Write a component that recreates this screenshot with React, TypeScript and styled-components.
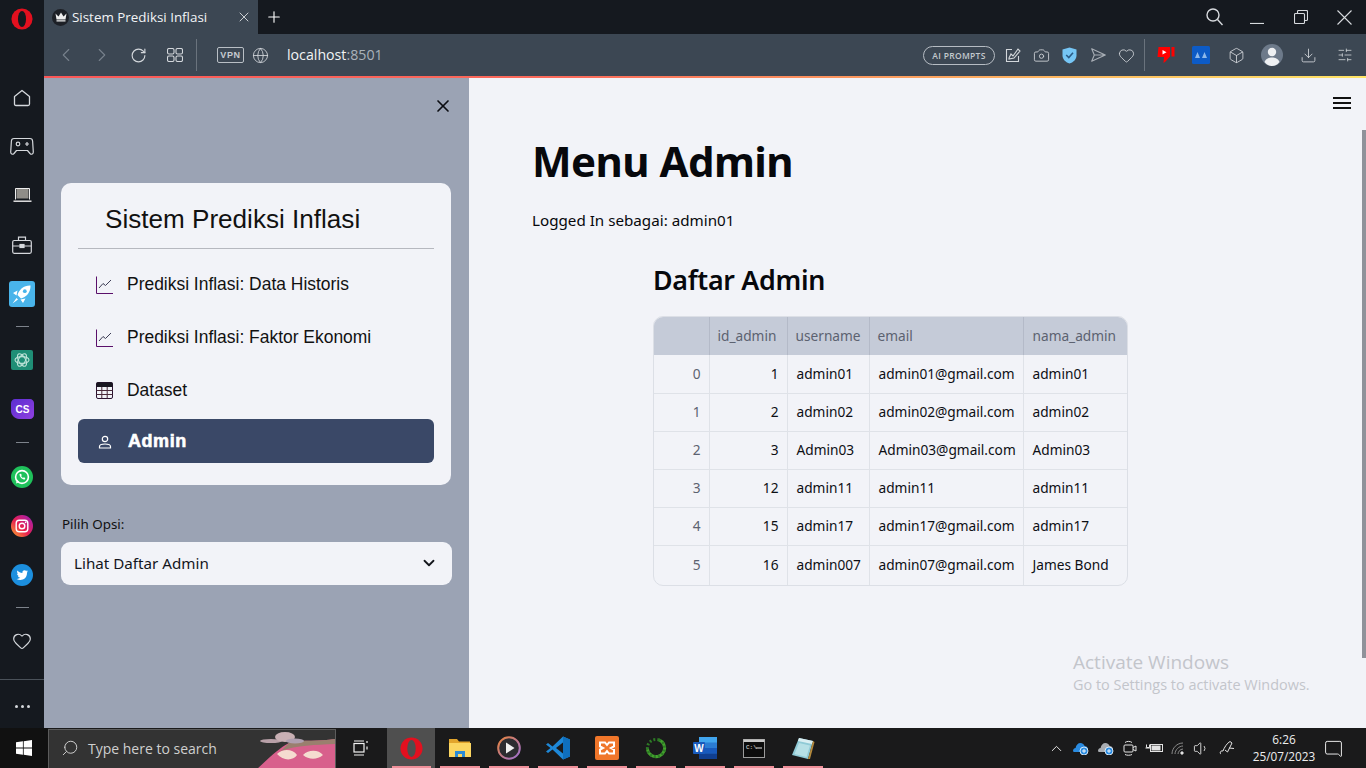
import { ReactNode } from 'react';
import styled, { createGlobalStyle } from 'styled-components';
import {
  ChevronDown,
  ChevronLeft,
  ChevronRight,
  ChevronUp,
  Download,
  Globe,
  Heart,
  Box,
  Plus,
  RotateCw,
  Search,
  SlidersHorizontal,
  X,
  Camera,
  Volume1,
  MessageSquare,
} from 'lucide-react';

const BODY_FONT = `'Noto Sans', 'Open Sans', sans-serif`;
const NAV_FONT = `'Liberation Sans', Arial, sans-serif`;
const UI_FONT = `'Open Sans', 'Noto Sans', sans-serif`;

const rows = [
  { i: 0, id: 1, username: 'admin01', email: 'admin01@gmail.com', nama: 'admin01' },
  { i: 1, id: 2, username: 'admin02', email: 'admin02@gmail.com', nama: 'admin02' },
  { i: 2, id: 3, username: 'Admin03', email: 'Admin03@gmail.com', nama: 'Admin03' },
  { i: 3, id: 12, username: 'admin11', email: 'admin11', nama: 'admin11' },
  { i: 4, id: 15, username: 'admin17', email: 'admin17@gmail.com', nama: 'admin17' },
  { i: 5, id: 16, username: 'admin007', email: 'admin07@gmail.com', nama: 'James Bond' },
];

const GlobalStyle = createGlobalStyle`
  html, body { margin: 0; padding: 0; height: 100%; overflow: hidden; }
  body { font-family: ${BODY_FONT}; background: #15191f; }
  * { box-sizing: border-box; }
`;

const Screen = styled.div`
  width: 1366px;
  height: 768px;
  display: grid;
  grid-template-rows: 728px 40px;
  overflow: hidden;
  position: relative;
`;

const Window = styled.div`
  display: grid;
  grid-template-columns: 44px 1fr;
  grid-template-rows: 728px;
  min-height: 0;
`;

/* opera side rail */
const Rail = styled.nav`
  background: #15191f;
  display: flex;
  flex-direction: column;
  align-items: center;
  color: #d5d8dc;
`;

const RailLogo = styled.div`
  height: 73px;
  padding-top: 8px;
  display: flex;
  justify-content: center;
  align-items: flex-start;
`;

const RailItem = styled.div`
  height: 49px;
  width: 44px;
  flex: none;
  display: flex;
  align-items: center;
  justify-content: center;
`;

const RailSep = styled.div<{ $h: number }>`
  height: ${(p) => p.$h}px;
  width: 44px;
  flex: none;
  display: flex;
  align-items: center;
  justify-content: center;
  &::after {
    content: '';
    width: 13px;
    height: 1px;
    background: #7d838b;
  }
`;

const RailFoot = styled.div`
  margin-top: 14px;
  width: 44px;
  height: 49px;
  padding-top: 5px;
  border-top: 1px solid #4a5159;
  display: flex;
  align-items: center;
  justify-content: center;
  gap: 3px;
`;

const RailDot = styled.span`
  width: 3px;
  height: 3px;
  border-radius: 50%;
  background: #d5d8dc;
`;

const Browser = styled.div`
  display: grid;
  grid-template-rows: 34px 42px 2px 1fr;
  min-width: 0;
  min-height: 0;
`;

const TabStrip = styled.div`
  background: #15191f;
  display: flex;
  align-items: stretch;
  color: #fff;
`;

const Tab = styled.div`
  width: 214px;
  background: #3c4753;
  display: flex;
  align-items: center;
  padding: 0 6px 0 8px;
  font: 400 13.4px ${UI_FONT};
  color: #f2f4f6;
  gap: 3px;
`;

const Favicon = styled.span`
  width: 17px;
  height: 17px;
  border-radius: 50%;
  background: #1d2026;
  display: flex;
  align-items: center;
  justify-content: center;
  flex: none;
`;

const TabTitle = styled.span`
  flex: 1;
  white-space: nowrap;
`;

const NewTab = styled.div`
  width: 32px;
  display: flex;
  align-items: center;
  justify-content: center;
`;

const WindowControls = styled.div`
  margin-left: auto;
  display: flex;
  align-items: center;
  color: #d7dade;
`;

const ControlSlot = styled.div<{ $w: number }>`
  width: ${(p) => p.$w}px;
  height: 34px;
  display: flex;
  align-items: center;
  justify-content: center;
`;

const Toolbar = styled.div`
  background: #3c4753;
  display: flex;
  align-items: center;
  padding-left: 4px;
  color: #d3d7db;
`;

const ToolSlot = styled.div<{ $w: number; $dim?: boolean }>`
  width: ${(p) => p.$w}px;
  height: 42px;
  flex: none;
  display: flex;
  align-items: center;
  justify-content: center;
  color: ${(p) => (p.$dim ? '#77818c' : 'inherit')};
`;

const ToolDivider = styled.div<{ $ml: number; $mr: number }>`
  width: 1px;
  height: 32px;
  background: #6a737d;
  flex: none;
  margin: 0 ${(p) => p.$mr}px 0 ${(p) => p.$ml}px;
`;

const VpnBadge = styled.span`
  width: 27px;
  height: 16px;
  border: 1px solid #b9bfc5;
  border-radius: 2px;
  font: 600 9px ${NAV_FONT};
  letter-spacing: 0.6px;
  color: #c6cbd0;
  display: flex;
  align-items: center;
  justify-content: center;
`;

const Address = styled.div`
  margin-left: 14px;
  font: 400 14.2px ${UI_FONT};
  color: #f1f3f5;
  margin-top: -2px;
  span {
    color: #aab2ba;
  }
`;

const ToolRight = styled.div`
  margin-left: auto;
  display: flex;
  align-items: center;
`;

const PromptPill = styled.div`
  width: 72px;
  height: 19px;
  border: 1px solid #b6bcc3;
  border-radius: 10px;
  font: 600 8.5px ${UI_FONT};
  letter-spacing: 0.3px;
  color: #c4c9ce;
  display: flex;
  align-items: center;
  justify-content: center;
  margin-right: 3px;
  white-space: nowrap;
`;

const AccentLine = styled.div`
  background: linear-gradient(90deg, #fb5757 0%, #fb6b5b 40%, #fdb35f 75%, #ffe566 100%);
`;

const Page = styled.div`
  display: grid;
  grid-template-columns: 425px 1fr;
  min-height: 0;
  position: relative;
`;

const Sidebar = styled.aside`
  background: #9ba3b4;
  padding: 105px 17px 0;
  position: relative;
`;

const CloseButton = styled.div`
  position: absolute;
  top: 18px;
  right: 16px;
  color: #0b0d12;
  display: flex;
`;

const NavCard = styled.div`
  width: 390px;
  height: 302px;
  background: #f2f3f8;
  border-radius: 10px;
  padding: 17px 17px 0;
`;

const NavTitle = styled.div`
  height: 49px;
  padding-left: 27px;
  padding-top: 4px;
  border-bottom: 1px solid #b6b8bf;
  font: 400 26.1px ${NAV_FONT};
  color: #111;
  margin-bottom: 9px;
`;

const NavItem = styled.div<{ $h: number }>`
  height: ${(p) => p.$h}px;
  display: flex;
  align-items: center;
  gap: 14px;
  padding-left: 18px;
  font: 400 17.45px ${NAV_FONT};
  color: #111;
`;

const ActiveNavItem = styled.div`
  height: 44px;
  margin-top: 3px;
  display: flex;
  align-items: center;
  gap: 16px;
  padding: 1px 0 0 20px;
  border-radius: 6px;
  font: 900 18px ${NAV_FONT};
  letter-spacing: 0.55px;
  color: #fff;
  background: #3a4867;
  -webkit-text-stroke: 0.6px #fff;
`;

const FieldLabel = styled.div`
  margin-top: 30px;
  font-size: 13.4px;
  line-height: 18px;
  color: #111;
  margin-bottom: 9px;
  padding-left: 1px;
`;

const SelectBox = styled.div`
  width: 391px;
  height: 43px;
  background: #f2f3f8;
  border-radius: 9px;
  padding: 0 14px 2px 13px;
  display: flex;
  align-items: center;
  justify-content: space-between;
  font-size: 15.2px;
  color: #14161c;
`;

const Main = styled.main`
  background: #f2f3f8;
  padding: 51px 0 0 63px;
  position: relative;
  color: #07080c;
`;

const PageTitle = styled.h1`
  margin: 0;
  font: 700 42px/64px ${BODY_FONT};
  letter-spacing: -0.55px;
`;

const LoggedIn = styled.p`
  margin: 15px 0 0;
  font-size: 15.2px;
  line-height: 24px;
`;

const TableBlock = styled.section`
  margin: 29px 0 0 121px;
  width: 475px;
`;

const SectionTitle = styled.h2`
  margin: 0 0 17px;
  font: 600 26.8px/38px ${BODY_FONT};
  letter-spacing: -0.3px;
`;

const TableFrame = styled.div`
  border: 1px solid #dcdfe6;
  border-radius: 10px;
  overflow: hidden;
  width: 475px;
`;

const Table = styled.table`
  border-collapse: collapse;
  table-layout: fixed;
  width: 473px;
  font-size: 13.7px;
`;

const Th = styled.th`
  height: 38px;
  background: #c5cbd8;
  color: #5c6270;
  font-weight: 400;
  text-align: left;
  padding: 0 8px 2px;
  border-right: 1px solid #b4bac8;
  white-space: nowrap;
  &:last-child {
    border-right: 0;
    padding-left: 9px;
  }
`;

const Td = styled.td<{ $right?: boolean; $muted?: boolean }>`
  height: 38px;
  padding: 0 8px 1px ${(p) => (p.$right ? 8 : 9)}px;
  color: ${(p) => (p.$muted ? '#5c6270' : '#0d0f14')};
  text-align: ${(p) => (p.$right ? 'right' : 'left')};
  border-right: 1px solid #dfe2e8;
  border-top: 1px solid #dfe2e8;
  white-space: nowrap;
  &:last-child { border-right: 0; }
  tr:first-child > & { border-top: 0; }
  tr:last-child > & { height: 40px; }
`;

const BurgerButton = styled.div`
  position: absolute;
  top: 19px;
  right: 15px;
  display: flex;
`;

const ScrollThumb = styled.div`
  position: absolute;
  right: 0;
  top: 52px;
  width: 4px;
  height: 528px;
  background: #8f929a;
`;

const Watermark = styled.div`
  position: absolute;
  left: 604px;
  top: 572px;
  color: #c3c5cb;
  font: 400 14.45px/21px ${UI_FONT};
  b {
    display: block;
    font-weight: 400;
    font-size: 19px;
    line-height: 24px;
  }
`;

/* windows taskbar */
const Taskbar = styled.footer`
  background: #1a1a1b;
  display: flex;
  align-items: stretch;
  color: #f2f2f2;
`;

const StartButton = styled.div`
  width: 48px;
  background: #111;
  display: flex;
  align-items: center;
  justify-content: center;
`;

const SearchBox = styled.div`
  width: 288px;
  margin-top: 1px;
  background: #333;
  border: 1px solid #5c5c5c;
  border-bottom: 0;
  display: flex;
  align-items: center;
  padding: 0 0 2px 12px;
  gap: 9px;
  font: 400 14px ${UI_FONT};
  color: #cfcfcf;
  position: relative;
  overflow: hidden;
`;

const SearchArt = styled.svg`
  position: absolute;
  right: 0;
  top: 0;
`;

const TaskSlot = styled.div<{ $w?: number; $on?: boolean; $run?: boolean }>`
  width: ${(p) => p.$w ?? 49}px;
  flex: none;
  display: flex;
  align-items: center;
  justify-content: center;
  position: relative;
  background: ${(p) => (p.$on ? '#4f4f4f' : 'transparent')};
  &::after {
    content: '';
    display: ${(p) => (p.$run ? 'block' : 'none')};
    position: absolute;
    left: 5px;
    right: 4px;
    bottom: 0;
    height: 2px;
    background: #ef8f99;
  }
`;

const Tray = styled.div`
  margin-left: auto;
  display: flex;
  align-items: center;
`;

const TraySlot = styled.div<{ $w: number }>`
  width: ${(p) => p.$w}px;
  flex: none;
  display: flex;
  align-items: center;
  justify-content: center;
  height: 40px;
`;

const Clock = styled.div`
  width: 70px;
  margin-left: 8px;
  text-align: center;
  font: 400 11.8px/17px ${UI_FONT};
  color: #efefef;
`;

const NotifySlot = styled(TraySlot)`
  margin-right: 19px;
`;

const OperaMark = ({ size, hole }: { size: number; hole: string }) => (
  <svg width={size} height={size} viewBox="0 0 24 24">
    <ellipse cx="12" cy="12" rx="11.5" ry="11.5" fill="#e3101f" />
    <ellipse cx="12" cy="12" rx="4.4" ry="8.8" fill={hole} />
  </svg>
);

const ChartIcon = () => (
  <svg width="17" height="18" viewBox="0 0 17 18" fill="none" strokeWidth="1">
    <path d="M0.5 0.5V17.5H17" stroke="#5a0f6a" />
    <path d="M3 12L7 7.5L9.5 9.5L15 4" stroke="#3d3d55" />
  </svg>
);

const TableIcon = () => (
  <svg width="17" height="17" viewBox="0 0 17 17" fill="none">
    <rect x="0.5" y="0.5" width="16" height="16" rx="1.5" stroke="#2b1230" />
    <rect x="0.5" y="0.5" width="16" height="4.5" fill="#191720" />
    <path d="M0.5 8.5H16.5M0.5 12.5H16.5M5.8 5V16.5M11.2 5V16.5" stroke="#4b2a3a" />
  </svg>
);

const AdminIcon = () => (
  <svg width="14" height="14" viewBox="0 0 14 14" fill="none" stroke="#fff" strokeWidth="1.2">
    <circle cx="7" cy="4" r="2.7" />
    <path d="M1.5 13V11.5C1.5 10 3.5 9 7 9S12.5 10 12.5 11.5V13Z" />
  </svg>
);

const RailHome = () => (
  <svg width="18" height="18" viewBox="0 0 18 18" fill="none" stroke="currentColor" strokeWidth="1.3" strokeLinejoin="round">
    <path d="M9 1.5L16.5 7.5V15C16.5 16 16 16.5 15 16.5H3C2 16.5 1.5 16 1.5 15V7.5Z" />
  </svg>
);

const RailGame = () => (
  <svg width="24" height="19" viewBox="0 0 24 19" fill="none" stroke="currentColor" strokeWidth="1.2" strokeLinejoin="round">
    <path d="M4 1.5H20C21.5 1.5 22.5 2.5 22.6 4L23.3 15C23.4 17 21.5 18 20 16.5L17.5 13.5H6.5L4 16.5C2.5 18 0.6 17 0.7 15L1.4 4C1.5 2.5 2.5 1.5 4 1.5Z" />
    <circle cx="8" cy="7" r="1.8" />
    <path d="M15 7H19M17 5V9" />
  </svg>
);

const RailLaptop = () => (
  <svg width="19" height="15" viewBox="0 0 19 15">
    <rect x="3" y="0.5" width="13" height="10.5" fill="#8f8d88" stroke="#15191f" />
    <path d="M2.5 0.5H16.5V11.5M2.5 0.5V11.5" stroke="#eee" fill="none" />
    <rect x="0.5" y="12.5" width="18" height="1.4" fill="#eee" />
  </svg>
);

const RailCase = () => (
  <svg width="20" height="18" viewBox="0 0 20 18" fill="none" stroke="currentColor" strokeWidth="1.2">
    <rect x="0.7" y="4.5" width="18.6" height="12.8" rx="1.5" />
    <path d="M6.5 4.5V1.2H13.5V4.5M0.7 10H8M12 10H19.3" />
    <rect x="8" y="8.5" width="4" height="3" fill="currentColor" />
  </svg>
);

const RocketTile = () => (
  <svg width="26" height="26" viewBox="0 0 26 26" fill="none">
    <rect width="26" height="26" rx="3" fill="#49b4ea" />
    <path d="M21.5 4.5C15 4.2 10 8.5 8.5 14L12 17.5C17.5 16 21.8 11 21.5 4.5Z" fill="#fff" />
    <path d="M8.5 9.5L4 12L7.5 14.5ZM16.5 17.5L14 22L11.5 18.5ZM7.5 17L3.5 22.5L9 18.5Z" fill="#fff" />
    <circle cx="15.8" cy="10.2" r="1.9" fill="#49b4ea" />
  </svg>
);

const ChatGptTile = () => (
  <svg width="22" height="20" viewBox="0 0 22 20" fill="none">
    <rect width="22" height="20" rx="2" fill="#1f8e76" />
    <g stroke="#bde2d8" strokeWidth="1.1">
      <ellipse cx="11" cy="10" rx="7" ry="3.4" />
      <ellipse cx="11" cy="10" rx="7" ry="3.4" transform="rotate(60 11 10)" />
      <ellipse cx="11" cy="10" rx="7" ry="3.4" transform="rotate(120 11 10)" />
    </g>
  </svg>
);

const CsTile = () => (
  <svg width="23" height="20" viewBox="0 0 23 20">
    <defs>
      <linearGradient id="cs" x1="0" y1="0" x2="1" y2="1">
        <stop offset="0" stopColor="#5b2fd0" />
        <stop offset="1" stopColor="#8f3fe0" />
      </linearGradient>
    </defs>
    <path d="M4 0H19C21 0 23 2 23 4V16C23 18 21 20 19 20H8C4 20 0 16 0 12V4C0 2 2 0 4 0Z" fill="url(#cs)" />
    <text x="11.5" y="13.5" textAnchor="middle" fontSize="10" fontWeight="700" fontFamily="Liberation Sans" fill="#fff">CS</text>
  </svg>
);

const WhatsappDot = () => (
  <svg width="22" height="22" viewBox="0 0 22 22">
    <circle cx="11" cy="11" r="11" fill="#1fc15b" />
    <circle cx="11" cy="11" r="6.4" fill="none" stroke="#fff" strokeWidth="1.6" />
    <path d="M5 17.5L6 13.5L8.5 16Z" fill="#fff" />
    <path d="M8.5 8C8.5 11 11 13.5 13.8 13.5L14.3 12L12.8 11.2L12 11.9C11 11.4 10.5 10.8 10.1 10L10.8 9.2L10 7.7Z" fill="#fff" />
  </svg>
);

const InstagramDot = () => (
  <svg width="22" height="22" viewBox="0 0 22 22" fill="none">
    <defs>
      <linearGradient id="ig" x1="0" y1="1" x2="1" y2="0">
        <stop offset="0" stopColor="#fdb02f" />
        <stop offset="0.45" stopColor="#e8204f" />
        <stop offset="1" stopColor="#9a1fc0" />
      </linearGradient>
    </defs>
    <circle cx="11" cy="11" r="11" fill="url(#ig)" />
    <rect x="5.2" y="5.2" width="11.6" height="11.6" rx="3" stroke="#fff" strokeWidth="1.4" />
    <circle cx="11" cy="11" r="2.8" stroke="#fff" strokeWidth="1.4" />
    <circle cx="14.6" cy="7.4" r="0.8" fill="#fff" />
  </svg>
);

const TwitterDot = () => (
  <svg width="22" height="22" viewBox="0 0 22 22">
    <circle cx="11" cy="11" r="11" fill="#1c8fde" />
    <path d="M17 7.2C16.5 7.4 16 7.6 15.5 7.6C16 7.3 16.4 6.8 16.6 6.2C16.1 6.5 15.6 6.7 15 6.8C13.8 5.6 11.4 6.4 11.4 8.4V9C9.4 9 7.6 8 6.4 6.6C5.8 7.8 6.1 9.1 7.1 9.9C6.7 9.9 6.3 9.8 6 9.6C6 10.8 6.8 11.8 8 12.1C7.6 12.2 7.2 12.2 6.9 12.1C7.2 13.1 8.2 13.8 9.3 13.8C8.2 14.7 6.9 15 5.6 14.9C9.8 17.4 16 15.4 16 9.1V8.6C16.4 8.3 16.8 7.8 17 7.2Z" fill="#fff" />
  </svg>
);

const WindowsLogo = () => (
  <svg width="16" height="16" viewBox="0 0 16 16" fill="#fff">
    <path d="M0 2.3L6.9 1.3V7.6H0ZM7.7 1.2L16 0V7.6H7.7ZM0 8.4H6.9V14.7L0 13.7ZM7.7 8.4H16V16L7.7 14.8Z" />
  </svg>
);

const FolderApp = () => (
  <svg width="22" height="20" viewBox="0 0 22 20">
    <path d="M0 1H8L10 3.5H21V7H0Z" fill="#e2a52c" />
    <rect y="5" width="22" height="14" fill="#fbd661" />
    <path d="M6 19V13H16V19H13V16H9V19Z" fill="#2b8bd6" />
  </svg>
);

const PlayerApp = () => (
  <svg width="24" height="24" viewBox="0 0 24 24">
    <defs>
      <linearGradient id="pl" x1="0" y1="0" x2="1" y2="1">
        <stop offset="0" stopColor="#e8843c" />
        <stop offset="1" stopColor="#9b6fd4" />
      </linearGradient>
    </defs>
    <circle cx="12" cy="12" r="10.8" fill="#2c2c30" stroke="url(#pl)" strokeWidth="2" />
    <path d="M9 6.5L17.5 12L9 17.5Z" fill="#f0f0f0" />
  </svg>
);

const VsCodeApp = () => (
  <svg width="24" height="24" viewBox="0 0 24 24">
    <path d="M17 0.5L24 3.5V20.5L17 23.5L6.5 13.5L2 17L0 15.5L4.5 12L0 8.5L2 7L6.5 10.5Z" fill="#1e88d8" />
    <path d="M17 6.5L10 12L17 17.5Z" fill="#1a1a1b" />
    <path d="M17 0.5L24 3.5V20.5L17 23.5Z" fill="#0f6fbd" />
    <path d="M17 6.5V17.5L19 16V8Z" fill="#0f6fbd" />
  </svg>
);

const XamppApp = () => (
  <svg width="24" height="24" viewBox="0 0 24 24" fill="none">
    <rect width="24" height="24" rx="2" fill="#f0762a" />
    <path d="M5 6.5H10L12 9L14 6.5H19V10.5L16 12L19 13.5V17.5H14L12 15L10 17.5H5V13.5L8 12L5 10.5Z" stroke="#fff" strokeWidth="2" />
  </svg>
);

const RingApp = () => (
  <svg width="22" height="22" viewBox="0 0 22 22" fill="none">
    <circle cx="11" cy="11" r="8.6" stroke="#45a32e" strokeWidth="3" strokeDasharray="36 18" transform="rotate(-70 11 11)" />
    <circle cx="11" cy="11" r="8.6" stroke="#2d7a25" strokeWidth="3" strokeDasharray="2 2" strokeDashoffset="-36" transform="rotate(-70 11 11)" />
  </svg>
);

const WordApp = () => (
  <svg width="24" height="22" viewBox="0 0 24 22">
    <rect x="6" y="0" width="18" height="22" rx="1" fill="#2b7cd3" />
    <rect x="6" y="11" width="18" height="5.5" fill="#185abd" />
    <rect x="6" y="16.5" width="18" height="5.5" fill="#103f91" />
    <rect x="6" y="0" width="18" height="5.5" fill="#41a5ee" />
    <rect x="0" y="5" width="12" height="12" rx="1" fill="#185abd" />
    <text x="6" y="14.5" textAnchor="middle" fontSize="10" fontWeight="700" fontFamily="Liberation Sans" fill="#fff">W</text>
  </svg>
);

const TerminalApp = () => (
  <svg width="22" height="19" viewBox="0 0 22 19" fill="none">
    <rect x="0.5" y="0.5" width="21" height="18" fill="#0c0c0c" stroke="#9b9b9b" />
    <rect x="0.5" y="0.5" width="21" height="2.5" fill="#c8c8c8" />
    <text x="3" y="9.5" fontSize="6" fontFamily="Liberation Mono" fill="#e6e6e6">C:\</text>
    <path d="M13 9H19" stroke="#e6e6e6" />
  </svg>
);

const NotepadApp = () => (
  <svg width="24" height="24" viewBox="0 0 24 24">
    <path d="M8 2L22 5L17 23L1 19Z" fill="#8fcad6" />
    <path d="M8 2L22 5L21 8L7 5Z" fill="#d9eef2" />
    <path d="M8 7L19 9.5L15.5 21L3.5 18Z" fill="#b6e0e6" />
    <path d="M22 5L23.5 6L19 23L17 23Z" fill="#b58a3d" />
  </svg>
);

const OneDrive = ({ color }: { color: string }) => (
  <svg width="17" height="14" viewBox="0 0 17 14">
    <path d="M1 10C1 8 2.4 7 3.6 7C4 4 6 2 8.5 2C10.5 2 12 3.4 12.6 5C14.5 5 16 6.4 16 8.4C16 10 15 11 13.5 11H3C1.8 11 1 10.6 1 10Z" fill={color} />
    <circle cx="12" cy="10" r="4" fill="#2a8be0" stroke="#fff" strokeWidth="0.8" />
    <path d="M10 10H14M12 8V12" stroke="#fff" strokeWidth="0.9" />
  </svg>
);

const TrayGlyph = ({ children }: { children: ReactNode }) => (
  <svg width="18" height="16" viewBox="0 0 18 16" fill="none" stroke="#e4e4e4" strokeWidth="1">
    {children}
  </svg>
);

const tableColumns = [55, 78, 82, 154, 104];

export default function App() {
  return (
    <Screen>
      <GlobalStyle />
      <Window>
        <Rail>
          <RailLogo>
            <OperaMark size={22} hole="#15191f" />
          </RailLogo>
          <RailItem><RailHome /></RailItem>
          <RailItem><RailGame /></RailItem>
          <RailItem><RailLaptop /></RailItem>
          <RailItem><RailCase /></RailItem>
          <RailItem><RocketTile /></RailItem>
          <RailSep $h={17} />
          <RailItem><ChatGptTile /></RailItem>
          <RailItem><CsTile /></RailItem>
          <RailSep $h={19} />
          <RailItem><WhatsappDot /></RailItem>
          <RailItem><InstagramDot /></RailItem>
          <RailItem><TwitterDot /></RailItem>
          <RailSep $h={17} />
          <RailItem><Heart size={20} strokeWidth={1.4} /></RailItem>
          <RailFoot><RailDot /><RailDot /><RailDot /></RailFoot>
        </Rail>

        <Browser>
          <TabStrip>
            <Tab>
              <Favicon>
                <svg width="12" height="10" viewBox="0 0 12 10" fill="#eee">
                  <path d="M0.5 1.5L3.5 4.5L6 0.5L8.5 4.5L11.5 1.5L10.5 7.5H1.5ZM1.5 8.2H10.5V9.5H1.5Z" />
                </svg>
              </Favicon>
              <TabTitle>Sistem Prediksi Inflasi</TabTitle>
              <X size={16} strokeWidth={1.4} color="#d5d8dc" />
            </Tab>
            <NewTab><Plus size={18} strokeWidth={1.5} /></NewTab>
            <WindowControls>
              <ControlSlot $w={42}>
                <svg width="17" height="18" viewBox="0 0 17 18" fill="none" stroke="currentColor" strokeWidth="1.4">
                  <circle cx="7" cy="7" r="6" />
                  <path d="M11.5 11.5L16.5 17" />
                </svg>
              </ControlSlot>
              <ControlSlot $w={44}>
                <svg width="14" height="14" viewBox="0 0 14 14" stroke="currentColor" strokeWidth="1.2">
                  <path d="M0 13.5H14" />
                </svg>
              </ControlSlot>
              <ControlSlot $w={44}>
                <svg width="14" height="14" viewBox="0 0 14 14" fill="none" stroke="currentColor" strokeWidth="1.1">
                  <rect x="0.5" y="3.5" width="10" height="10" rx="1" />
                  <path d="M3.5 3.5V1.5C3.5 1 4 0.5 4.5 0.5H12.5C13 0.5 13.5 1 13.5 1.5V9.5C13.5 10 13 10.5 12.5 10.5H10.5" />
                </svg>
              </ControlSlot>
              <ControlSlot $w={43}>
                <svg width="15" height="15" viewBox="0 0 15 15" stroke="currentColor" strokeWidth="1.1">
                  <path d="M0.5 0.5L14.5 14.5M14.5 0.5L0.5 14.5" />
                </svg>
              </ControlSlot>
            </WindowControls>
          </TabStrip>

          <Toolbar>
            <ToolSlot $w={36} $dim><ChevronLeft size={22} strokeWidth={1.2} /></ToolSlot>
            <ToolSlot $w={36} $dim><ChevronRight size={22} strokeWidth={1.2} /></ToolSlot>
            <ToolSlot $w={37}><RotateCw size={17} strokeWidth={1.6} /></ToolSlot>
            <ToolSlot $w={35}>
              <svg width="16" height="14" viewBox="0 0 16 14" fill="none" stroke="currentColor" strokeWidth="1.1">
                <rect x="0.5" y="0.5" width="6.5" height="5.5" rx="1.5" />
                <rect x="9" y="0.5" width="6.5" height="5.5" rx="1.5" />
                <rect x="0.5" y="8" width="6.5" height="5.5" rx="1.5" />
                <rect x="9" y="8" width="6.5" height="5.5" rx="1.5" />
              </svg>
            </ToolSlot>
            <ToolDivider $ml={4} $mr={17} />
            <ToolSlot $w={33}><VpnBadge>VPN</VpnBadge></ToolSlot>
            <ToolSlot $w={26}><Globe size={17} strokeWidth={1.2} /></ToolSlot>
            <Address>localhost<span>:8501</span></Address>
            <ToolRight>
              <PromptPill>AI PROMPTS</PromptPill>
              <ToolSlot $w={30}>
                <svg width="16" height="16" viewBox="0 0 16 16" fill="none" stroke="currentColor" strokeWidth="1.1">
                  <path d="M7 2.5H1.5V14.5H13.5V9M4 11L6 7L8 9L13 2L15 4L9 11L4 12Z" />
                </svg>
              </ToolSlot>
              <ToolSlot $w={26}><Camera size={17} strokeWidth={1.2} /></ToolSlot>
              <ToolSlot $w={30}>
                <svg width="15" height="17" viewBox="0 0 15 17">
                  <path d="M7.5 0.5L14.5 2.5V8.5C14.5 12.5 11 15.5 7.5 16.5C4 15.5 0.5 12.5 0.5 8.5V2.5Z" fill="#76c6f5" />
                  <path d="M4.2 8L6.8 10.5L11 5.8" fill="none" stroke="#2b5c86" strokeWidth="1.6" />
                </svg>
              </ToolSlot>
              <ToolSlot $w={28}>
                <svg width="15" height="14" viewBox="0 0 15 14" fill="none" stroke="#a8aeb5" strokeWidth="1.1" strokeLinejoin="round">
                  <path d="M0.7 0.7L14.3 7L0.7 13.3L3.3 7ZM3.3 7H14.3" />
                </svg>
              </ToolSlot>
              <ToolSlot $w={28}><Heart size={17} strokeWidth={1.2} /></ToolSlot>
              <ToolDivider $ml={4} $mr={5} />
              <ToolSlot $w={32}>
                <svg width="18" height="18" viewBox="0 0 18 18" fill="#f00">
                  <path d="M1.5 1H13V10.5L8.5 15.5L6.5 17L7 11H0.5Z" />
                  <rect x="14.5" y="1" width="3" height="9.5" />
                  <path d="M5.5 4L9.5 6.3L5.5 8.6Z" fill="#fff" />
                </svg>
              </ToolSlot>
              <ToolSlot $w={38}>
                <svg width="18" height="18" viewBox="0 0 18 18">
                  <rect width="18" height="18" rx="1.5" fill="#0d5bc6" />
                  <path d="M3 12L5.5 6L8 12ZM10 12L12.5 6L15 12Z" fill="#8db8ea" />
                </svg>
              </ToolSlot>
              <ToolSlot $w={32}><Box size={17} strokeWidth={1.2} /></ToolSlot>
              <ToolSlot $w={40}>
                <svg width="22" height="22" viewBox="0 0 22 22">
                  <circle cx="11" cy="11" r="11" fill="#6d7a8a" />
                  <circle cx="11" cy="8" r="4.2" fill="#eef0f2" />
                  <path d="M3.5 18C5 14.5 8 13.5 11 13.5S17 14.5 18.5 18C16.5 20.5 14 22 11 22S5.5 20.5 3.5 18Z" fill="#eef0f2" />
                </svg>
              </ToolSlot>
              <ToolSlot $w={32}><Download size={17} strokeWidth={1.2} /></ToolSlot>
              <ToolSlot $w={42}><SlidersHorizontal size={16} strokeWidth={1.2} /></ToolSlot>
            </ToolRight>
          </Toolbar>

          <AccentLine />

          <Page>
            <Sidebar>
              <CloseButton><X size={20} strokeWidth={2} /></CloseButton>
              <NavCard>
                <NavTitle>Sistem Prediksi Inflasi</NavTitle>
                <NavItem $h={53}><ChartIcon />Prediksi Inflasi: Data Historis</NavItem>
                <NavItem $h={53}><ChartIcon />Prediksi Inflasi: Faktor Ekonomi</NavItem>
                <NavItem $h={52}><TableIcon />Dataset</NavItem>
                <ActiveNavItem><AdminIcon />Admin</ActiveNavItem>
              </NavCard>
              <FieldLabel>Pilih Opsi:</FieldLabel>
              <SelectBox>
                Lihat Daftar Admin
                <ChevronDown size={18} strokeWidth={2.4} />
              </SelectBox>
            </Sidebar>

            <Main>
              <BurgerButton>
                <svg width="18" height="12" viewBox="0 0 18 12" stroke="#111" strokeWidth="2">
                  <path d="M0 1H18M0 6H18M0 11H18" />
                </svg>
              </BurgerButton>
              <PageTitle>Menu Admin</PageTitle>
              <LoggedIn>Logged In sebagai: admin01</LoggedIn>
              <TableBlock>
                <SectionTitle>Daftar Admin</SectionTitle>
                <TableFrame>
                  <Table>
                    <colgroup>
                      {tableColumns.map((w) => (
                        <col key={w} style={{ width: w }} />
                      ))}
                    </colgroup>
                    <thead>
                      <tr>
                        <Th />
                        <Th>id_admin</Th>
                        <Th>username</Th>
                        <Th>email</Th>
                        <Th>nama_admin</Th>
                      </tr>
                    </thead>
                    <tbody>
                      {rows.map((row) => (
                        <tr key={row.i}>
                          <Td $right $muted>{row.i}</Td>
                          <Td $right>{row.id}</Td>
                          <Td>{row.username}</Td>
                          <Td>{row.email}</Td>
                          <Td>{row.nama}</Td>
                        </tr>
                      ))}
                    </tbody>
                  </Table>
                </TableFrame>
              </TableBlock>
              <ScrollThumb />
              <Watermark>
                <b>Activate Windows</b>
                Go to Settings to activate Windows.
              </Watermark>
            </Main>
          </Page>
        </Browser>
      </Window>

      <Taskbar>
        <StartButton><WindowsLogo /></StartButton>
        <SearchBox>
          <Search size={18} strokeWidth={1.3} style={{ transform: 'scaleX(-1)' }} />
          Type here to search
          <SearchArt width="78" height="39" viewBox="0 0 78 39">
            <path d="M0 39C12 28 22 18 32 13C46 9 62 12 78 9V39Z" fill="#d8608c" />
            <path d="M24 21C40 15 58 15 78 14V9C62 12 46 9 32 13Z" fill="#9a7f6e" />
            <path d="M20 24C26 18 36 19 40 25C36 31 26 31 20 24ZM46 25C52 19 62 20 66 25C60 30 52 30 46 25Z" fill="#f5dcd0" />
            <ellipse cx="14" cy="11" rx="11" ry="2" fill="#b8a0a8" />
            <ellipse cx="28" cy="7" rx="10" ry="5" fill="#c9b0b4" />
            <ellipse cx="38" cy="11" rx="9" ry="2.4" fill="#b0a0b0" />
          </SearchArt>
        </SearchBox>
        <TaskSlot $w={51}>
          <svg width="17" height="16" viewBox="0 0 17 16" fill="none" stroke="#f2f2f2" strokeWidth="1.2">
            <rect x="1" y="3.5" width="10" height="8.5" />
            <path d="M1 1H11M1 15H11M14 1V3M14 6.5V9.5" />
          </svg>
        </TaskSlot>
        <TaskSlot $w={48} $on $run>
          <OperaMark size={23} hole="#4f4f4f" />
        </TaskSlot>
        <TaskSlot $run><FolderApp /></TaskSlot>
        <TaskSlot $run><PlayerApp /></TaskSlot>
        <TaskSlot $run><VsCodeApp /></TaskSlot>
        <TaskSlot $run><XamppApp /></TaskSlot>
        <TaskSlot $run><RingApp /></TaskSlot>
        <TaskSlot $run><WordApp /></TaskSlot>
        <TaskSlot $run><TerminalApp /></TaskSlot>
        <TaskSlot $run><NotepadApp /></TaskSlot>
        <Tray>
          <TraySlot $w={24}><ChevronUp size={17} strokeWidth={1.3} /></TraySlot>
          <TraySlot $w={25}><OneDrive color="#2a8be0" /></TraySlot>
          <TraySlot $w={25}><OneDrive color="#a9adb2" /></TraySlot>
          <TraySlot $w={23}>
            <TrayGlyph>
              <rect x="3" y="5" width="9" height="7" rx="1" />
              <path d="M12 7.5L15 6V11L12 9.5M4 2.5C6 1 9 1 11 2.5M4 14.5C6 15.5 9 15.5 11 14.5" />
            </TrayGlyph>
          </TraySlot>
          <TraySlot $w={25}>
            <TrayGlyph>
              <rect x="5.5" y="4.5" width="12" height="7" />
              <rect x="7" y="6" width="8" height="4" fill="#e4e4e4" />
              <path d="M0.5 8H5.5M1.5 4.5V7.5H4.5V4.5" />
            </TrayGlyph>
          </TraySlot>
          <TraySlot $w={24}>
            <TrayGlyph>
              <path d="M3 14C3 8 8 3 14 3M6 14C6 10 10 6 14 6M9 14C9 12 11 9 14 9" stroke="#8a8a8a" />
              <circle cx="13" cy="13" r="1.2" fill="#e4e4e4" />
            </TrayGlyph>
          </TraySlot>
          <TraySlot $w={22}><Volume1 size={17} strokeWidth={1.2} /></TraySlot>
          <TraySlot $w={29}>
            <TrayGlyph>
              <path d="M3 14C1 13 3 10 5 11C6 8 9 3 12 1.5L14 3L9.5 12L7 10M11 8L16 8.5" />
            </TrayGlyph>
          </TraySlot>
          <Clock>6:26<br />25/07/2023</Clock>
          <NotifySlot $w={28}><MessageSquare size={19} strokeWidth={1.2} style={{ transform: 'scaleX(-1)' }} /></NotifySlot>
        </Tray>
      </Taskbar>
    </Screen>
  );
}
